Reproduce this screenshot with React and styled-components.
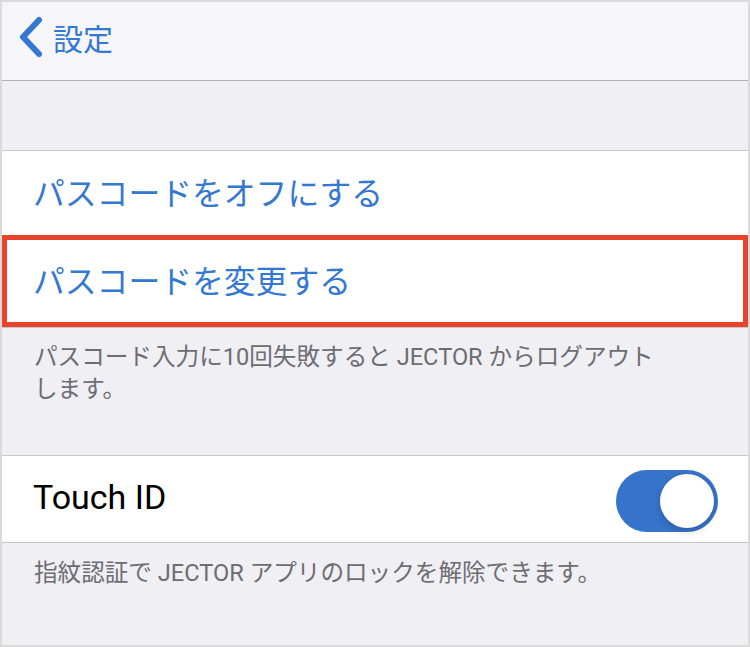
import React, { useState } from 'react';
import styled, { createGlobalStyle } from 'styled-components';

const GlobalStyle = createGlobalStyle`
  html, body {
    margin: 0;
    padding: 0;
    background: #ffffff;
  }
  body {
    font-family: Roboto, "Noto Sans CJK JP", sans-serif;
    -webkit-font-smoothing: antialiased;
  }
`;

const Screen = styled.div`
  width: 750px;
  height: 647px;
  box-sizing: border-box;
  border: 2px solid #dadada;
  background: #efeff4;
  display: flex;
  flex-direction: column;
  overflow: hidden;
`;

const NavBar = styled.div`
  height: 78px;
  flex-shrink: 0;
  background: #f6f6f8;
  border-bottom: 1px solid #b3b3b6;
  display: flex;
  align-items: center;
  padding-left: 16px;
`;

const BackButton = styled.button`
  display: flex;
  align-items: center;
  gap: 9px;
  border: none;
  background: none;
  padding: 0;
  color: #3478d1;
  font-family: "Noto Sans CJK JP", sans-serif;
  font-size: 30px;
  line-height: 42px;
  cursor: pointer;
  margin-top: -8px;
`;

const Spacer = styled.div`
  height: ${(p) => p.h}px;
  flex-shrink: 0;
`;

const Group = styled.div`
  background: #ffffff;
  border-top: 1px solid #c8c7cc;
  border-bottom: 1px solid #c8c7cc;
  flex-shrink: 0;
`;

const Row = styled.div`
  height: ${(p) => p.h}px;
  box-sizing: border-box;
  display: flex;
  align-items: center;
  justify-content: space-between;
  padding: 0 30px 4px 31px;
  font-size: ${(p) => (p.$action ? '31.8px' : '34px')};
  color: ${(p) => (p.$action ? '#3478d1' : '#000000')};
  font-family: ${(p) =>
    p.$action ? '"Noto Sans CJK JP", sans-serif' : 'Roboto, "Noto Sans CJK JP", sans-serif'};
`;

const Highlight = styled(Row)`
  border: 5px solid #e8432b;
  padding-left: 26px;
`;

const Footer = styled.p`
  margin: 0;
  padding: ${(p) => p.pad};
  font-size: 23.6px;
  line-height: 32px;
  color: #6d6d72;
  flex-shrink: 0;
`;

const Track = styled.button`
  width: 102px;
  height: 62px;
  border-radius: 31px;
  border: none;
  padding: 4px;
  box-sizing: border-box;
  background: ${(p) => (p.on ? '#3674cb' : '#e5e5ea')};
  display: flex;
  justify-content: ${(p) => (p.on ? 'flex-end' : 'flex-start')};
  align-items: center;
  cursor: pointer;
  margin-top: 8px;
`;

const Knob = styled.span`
  width: 54px;
  height: 54px;
  border-radius: 50%;
  background: #ffffff;
  box-shadow: 0 3px 8px rgba(0, 0, 0, 0.18), 0 0 1px rgba(0, 0, 0, 0.12);
`;

const Chevron = () => (
  <svg width="26" height="42" viewBox="0 0 26 42">
    <path
      d="M21 4 L5 21 L21 38"
      fill="none"
      stroke="#3478d1"
      strokeWidth="6"
      strokeLinecap="round"
      strokeLinejoin="round"
    />
  </svg>
);

const App = () => {
  const [touchId, setTouchId] = useState(true);

  return (
    <>
      <GlobalStyle />
      <Screen>
        <NavBar>
          <BackButton>
            <Chevron />
            設定
          </BackButton>
        </NavBar>
        <Spacer h={69} />
        <Group>
          <Row h={84} $action>パスコードをオフにする</Row>
          <Highlight h={92} $action>パスコードを変更する</Highlight>
        </Group>
        <Footer pad="13px 90px 0 32px">
          パスコード入力に10回失敗すると JECTOR からログアウトします。
        </Footer>
        <Spacer h={50} />
        <Group>
          <Row h={86}>
            Touch ID
            <Track on={touchId} onClick={() => setTouchId(!touchId)}>
              <Knob />
            </Track>
          </Row>
        </Group>
        <Footer pad="14px 30px 0 32px">
          指紋認証で JECTOR アプリのロックを解除できます。
        </Footer>
      </Screen>
    </>
  );
};

export default App;
